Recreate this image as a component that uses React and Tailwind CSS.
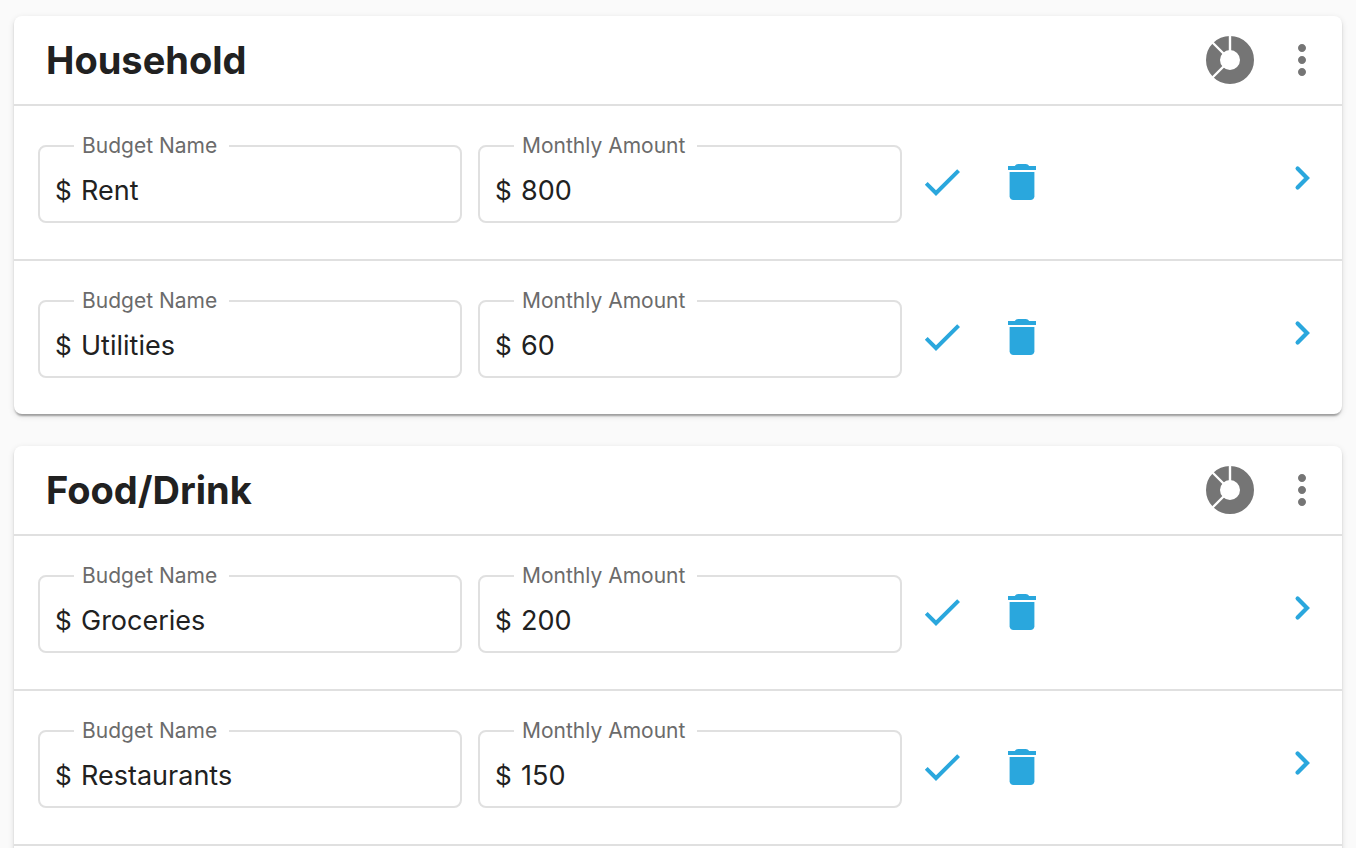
import { useState } from 'react';
import { MdCheck, MdMoreVert } from 'react-icons/md';

const groups = [
    {
        id: 'household',
        title: 'Household',
        budgets: [
            { id: 'rent', name: 'Rent', amount: '800' },
            { id: 'utilities', name: 'Utilities', amount: '60' },
        ],
    },
    {
        id: 'food-drink',
        title: 'Food/Drink',
        budgets: [
            { id: 'groceries', name: 'Groceries', amount: '200' },
            { id: 'restaurants', name: 'Restaurants', amount: '150' },
        ],
        hasMore: true,
    },
];

const DonutIcon = () => (
    <svg viewBox="0 0 48 48" className="size-12" aria-hidden="true">
        <circle cx="24" cy="24" r="17" fill="none" stroke="currentColor" strokeWidth="14" />
        <path d="M24 24V0M24 24L4 4M24 24L4 44" fill="none" stroke="#fff" strokeWidth="2.4" />
    </svg>
);

const TrashIcon = () => (
    <svg viewBox="0 0 24 24" className="size-12" fill="currentColor" aria-hidden="true">
        <path d="M5.8 7v12.1c0 1 .9 1.9 1.9 1.9h8.6c1 0 1.9-.9 1.9-1.9V7z" />
        <path d="M15.6 4c-.4-.6-1-1-1.7-1h-3.8c-.7 0-1.3.4-1.7 1H5v2h14V4z" />
    </svg>
);

const ChevronIcon = () => (
    <svg viewBox="0 0 24 24" className="size-12" fill="none" stroke="currentColor" strokeWidth="2.1" strokeLinecap="round" aria-hidden="true">
        <path d="M9.8 7.3L14.5 12l-4.7 4.7" />
    </svg>
);

const Field = ({ id, label, defaultValue }) => {
    const [value, setValue] = useState(defaultValue);

    return (
        <div className="relative flex h-[78px] min-w-0 max-w-[424px] flex-1 items-center rounded-lg border-2 border-[#e0e0e0] pl-[15px] pr-3 pt-3.5">
            <label htmlFor={id} className="absolute -top-[13px] left-[34px] bg-white pl-2 pr-3 text-[21px] leading-6 text-[#6b6b6b]">
                {label}
            </label>
            <span className="w-[26px] text-[26px] leading-8">$</span>
            <input
                id={id}
                type="text"
                value={value}
                onChange={(e) => setValue(e.target.value)}
                className="min-w-0 flex-1 bg-transparent text-[27px] leading-8 outline-none"
            />
        </div>
    );
};

const BudgetRow = ({ budget }) => (
    <li className="flex items-start pb-9 pl-6 pr-4 pt-[39px]">
        <div className="flex min-w-0 flex-1 gap-4">
            <Field id={`${budget.id}-name`} label="Budget Name" defaultValue={budget.name} />
            <Field id={`${budget.id}-amount`} label="Monthly Amount" defaultValue={budget.amount} />
            <div className="flex gap-8 pt-[13px] text-[#2aa7dd]">
                <button type="button" aria-label="Save" className="size-12">
                    <MdCheck className="size-12" />
                </button>
                <button type="button" aria-label="Delete" className="size-12">
                    <TrashIcon />
                </button>
            </div>
        </div>
        <button type="button" aria-label="Open" className="mt-[9px] size-12 text-[#2aa7dd]">
            <ChevronIcon />
        </button>
    </li>
);

const BudgetCard = ({ group }) => (
    <section className="rounded-lg bg-white shadow-[0_4px_2px_-2px_rgba(0,0,0,0.2),0_2px_2px_rgba(0,0,0,0.14),0_2px_6px_rgba(0,0,0,0.12)]">
        <header className="flex h-[90px] items-center border-b-2 border-[#e0e0e0] pl-8 pr-4">
            <h2 className="flex-1 text-[38px] font-bold leading-[48px]">{group.title}</h2>
            <div className="flex gap-6 text-[#757575]">
                <button type="button" aria-label="Chart" className="size-12">
                    <DonutIcon />
                </button>
                <button type="button" aria-label="More" className="size-12">
                    <MdMoreVert className="size-12" />
                </button>
            </div>
        </header>
        <ul className="divide-y-2 divide-[#e0e0e0]">
            {group.budgets.map((budget) => (
                <BudgetRow key={budget.id} budget={budget} />
            ))}
            {group.hasMore && <li className="h-6" />}
        </ul>
    </section>
);

const App = () => {
    return (
        <main className="flex min-h-screen flex-col gap-8 bg-[#fafafa] px-3.5 pt-4 font-['Inter',sans-serif] text-[#212121]">
            {groups.map((group) => (
                <BudgetCard key={group.id} group={group} />
            ))}
        </main>
    );
};

export default App;
